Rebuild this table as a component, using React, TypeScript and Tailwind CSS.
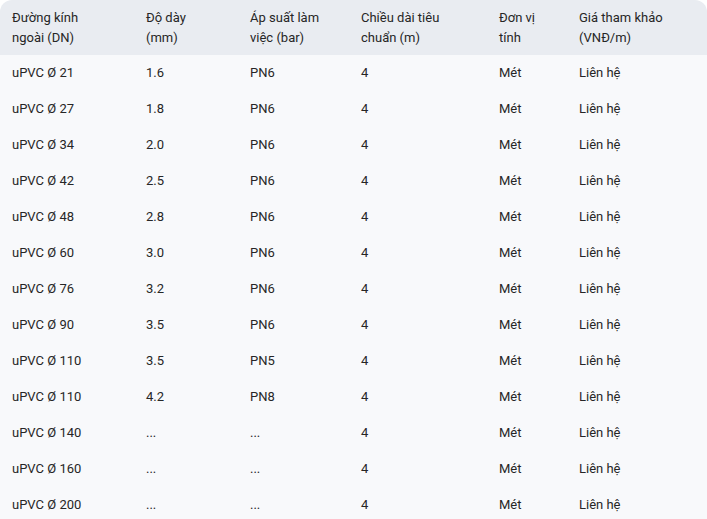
const headers: [string, string][] = [
  ["Đường kính", "ngoài (DN)"],
  ["Độ dày", "(mm)"],
  ["Áp suất làm", "việc (bar)"],
  ["Chiều dài tiêu", "chuẩn (m)"],
  ["Đơn vị", "tính"],
  ["Giá tham khảo", "(VNĐ/m)"],
];

const rows: string[][] = [
  ["uPVC Ø 21", "1.6", "PN6"],
  ["uPVC Ø 27", "1.8", "PN6"],
  ["uPVC Ø 34", "2.0", "PN6"],
  ["uPVC Ø 42", "2.5", "PN6"],
  ["uPVC Ø 48", "2.8", "PN6"],
  ["uPVC Ø 60", "3.0", "PN6"],
  ["uPVC Ø 76", "3.2", "PN6"],
  ["uPVC Ø 90", "3.5", "PN6"],
  ["uPVC Ø 110", "3.5", "PN5"],
  ["uPVC Ø 110", "4.2", "PN8"],
  ["uPVC Ø 140", "...", "..."],
  ["uPVC Ø 160", "...", "..."],
  ["uPVC Ø 200", "...", "..."],
];

export default function App() {
  return (
    <div className="w-[707px] h-[519px] overflow-hidden bg-white font-['Roboto',sans-serif] text-[13px] text-[#262626]">
      <table className="w-full table-fixed border-collapse">
        <colgroup>
          <col className="w-[134px]" />
          <col className="w-[104px]" />
          <col className="w-[111px]" />
          <col className="w-[138px]" />
          <col className="w-[80px]" />
          <col />
        </colgroup>
        <thead>
          <tr className="bg-[#e9ecf1]">
            {headers.map((h, i) => (
              <th
                key={h[0]}
                className={`h-[55px] px-3 text-left align-middle font-normal leading-[20px] ${
                  i === 0 ? "rounded-tl-xl" : ""
                } ${i === headers.length - 1 ? "rounded-tr-xl" : ""}`}
              >
                {h[0]}
                <br />
                {h[1]}
              </th>
            ))}
          </tr>
        </thead>
        <tbody className="bg-[#f8f9fb]">
          {rows.map((r, i) => (
            <tr key={i} className="h-[36px]">
              <td className="px-3">{r[0]}</td>
              <td className="px-3">{r[1]}</td>
              <td className="px-3">{r[2]}</td>
              <td className="px-3">4</td>
              <td className="px-3">Mét</td>
              <td className="px-3">Liên hệ</td>
            </tr>
          ))}
        </tbody>
      </table>
    </div>
  );
}
